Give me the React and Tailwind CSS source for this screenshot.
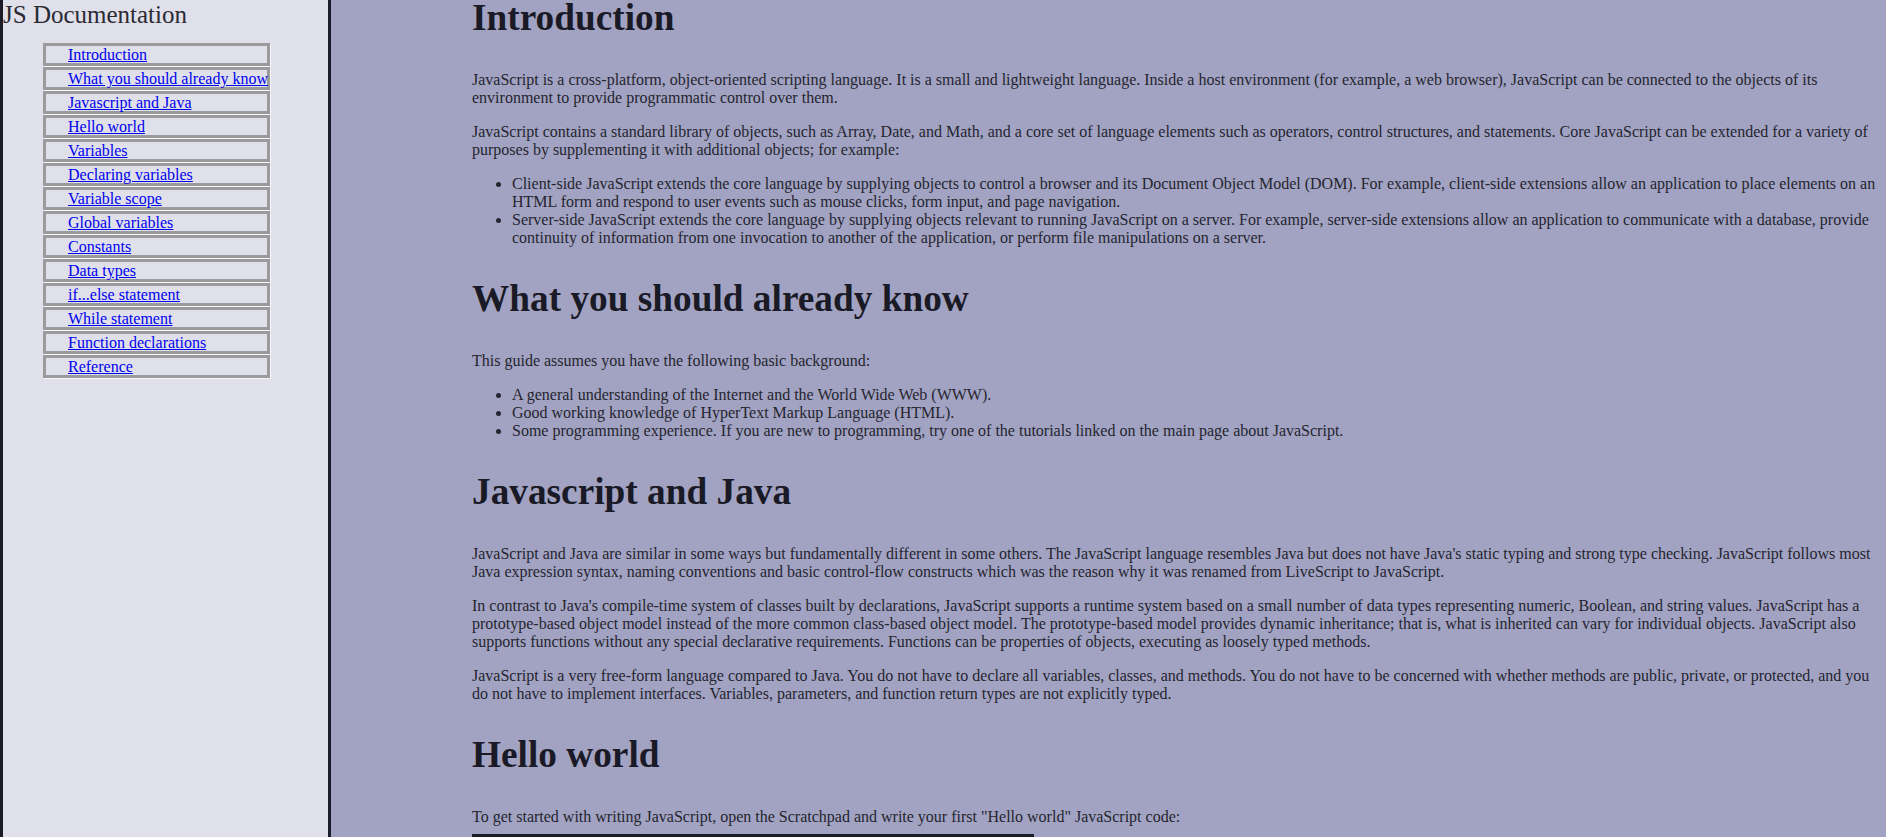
import React from "react";

const navItems = [
  "Introduction",
  "What you should already know",
  "Javascript and Java",
  "Hello world",
  "Variables",
  "Declaring variables",
  "Variable scope",
  "Global variables",
  "Constants",
  "Data types",
  "if...else statement",
  "While statement",
  "Function declarations",
  "Reference",
];

function H({ children, first }) {
  return (
    <h2
      className={
        "text-[37.3px] font-bold leading-[44px] text-[#1a1a26] mb-[31px] " +
        (first ? "-mt-[4px]" : "mt-[30px]")
      }
    >
      {children}
    </h2>
  );
}

function P({ children, last }) {
  return <p className={(last ? "mb-2" : "mb-4") + " leading-[18px]"}>{children}</p>;
}

function UL({ items }) {
  return (
    <ul className="list-disc pl-[40px] mb-4 leading-[18px]">
      {items.map((t, i) => (
        <li key={i}>{t}</li>
      ))}
    </ul>
  );
}

export default function App() {
  return (
    <div
      className="flex h-screen w-full overflow-hidden text-[16px] text-[#25252f]"
      style={{ fontFamily: '"Liberation Serif", "Times New Roman", serif' }}
    >
      <nav className="w-[331px] shrink-0 h-full bg-[#e0e0ea] border-l-[3px] border-r-[3px] border-[#1c1c28]">
        <header className="text-[25px] leading-[29px] text-[#2a2a33] whitespace-nowrap">
          JS Documentation
        </header>
        <ul className="mt-[14px] ml-[40px] w-[227px]">
          {navItems.map((t) => (
            <li
              key={t}
              className="h-[23px] mb-[1px] border-[3px] border-[#9b9b9d] shadow-[1px_1px_0_#f6f6fa] pl-[22px] leading-[17px] whitespace-nowrap"
            >
              <a href="#" className="text-[#0000ee] underline">
                {t}
              </a>
            </li>
          ))}
        </ul>
      </nav>
      <main className="flex-1 h-full overflow-hidden bg-[#a2a3c2] pl-[141px] pr-[6px]">
        <section>
          <H first>Introduction</H>
          <P>
            JavaScript is a cross-platform, object-oriented scripting language. It is a small and lightweight language. Inside a host environment (for example, a web browser), JavaScript can be connected to the objects of its environment to provide programmatic control over them.
          </P>
          <P>
            JavaScript contains a standard library of objects, such as Array, Date, and Math, and a core set of language elements such as operators, control structures, and statements. Core JavaScript can be extended for a variety of purposes by supplementing it with additional objects; for example:
          </P>
          <UL
            items={[
              "Client-side JavaScript extends the core language by supplying objects to control a browser and its Document Object Model (DOM). For example, client-side extensions allow an application to place elements on an HTML form and respond to user events such as mouse clicks, form input, and page navigation.",
              "Server-side JavaScript extends the core language by supplying objects relevant to running JavaScript on a server. For example, server-side extensions allow an application to communicate with a database, provide continuity of information from one invocation to another of the application, or perform file manipulations on a server.",
            ]}
          />
        </section>
        <section>
          <H>What you should already know</H>
          <P>This guide assumes you have the following basic background:</P>
          <UL
            items={[
              "A general understanding of the Internet and the World Wide Web (WWW).",
              "Good working knowledge of HyperText Markup Language (HTML).",
              "Some programming experience. If you are new to programming, try one of the tutorials linked on the main page about JavaScript.",
            ]}
          />
        </section>
        <section>
          <H>Javascript and Java</H>
          <P>
            JavaScript and Java are similar in some ways but fundamentally different in some others. The JavaScript language resembles Java but does not have Java's static typing and strong type checking. JavaScript follows most Java expression syntax, naming conventions and basic control-flow constructs which was the reason why it was renamed from LiveScript to JavaScript.
          </P>
          <P>
            In contrast to Java's compile-time system of classes built by declarations, JavaScript supports a runtime system based on a small number of data types representing numeric, Boolean, and string values. JavaScript has a prototype-based object model instead of the more common class-based object model. The prototype-based model provides dynamic inheritance; that is, what is inherited can vary for individual objects. JavaScript also supports functions without any special declarative requirements. Functions can be properties of objects, executing as loosely typed methods.
          </P>
          <P>
            JavaScript is a very free-form language compared to Java. You do not have to declare all variables, classes, and methods. You do not have to be concerned with whether methods are public, private, or protected, and you do not have to implement interfaces. Variables, parameters, and function return types are not explicitly typed.
          </P>
        </section>
        <section>
          <H>Hello world</H>
          <P last>
            To get started with writing JavaScript, open the Scratchpad and write your first "Hello world" JavaScript code:
          </P>
          <pre
            className="w-[562px] bg-[#1c1c28] text-[#e0e0ea] p-4 text-[13px]"
            style={{ fontFamily: '"Liberation Mono", monospace' }}
          >
{`function greetMe(yourName) { alert("Hello " + yourName); }

greetMe("World");`}
          </pre>
        </section>
      </main>
    </div>
  );
}
